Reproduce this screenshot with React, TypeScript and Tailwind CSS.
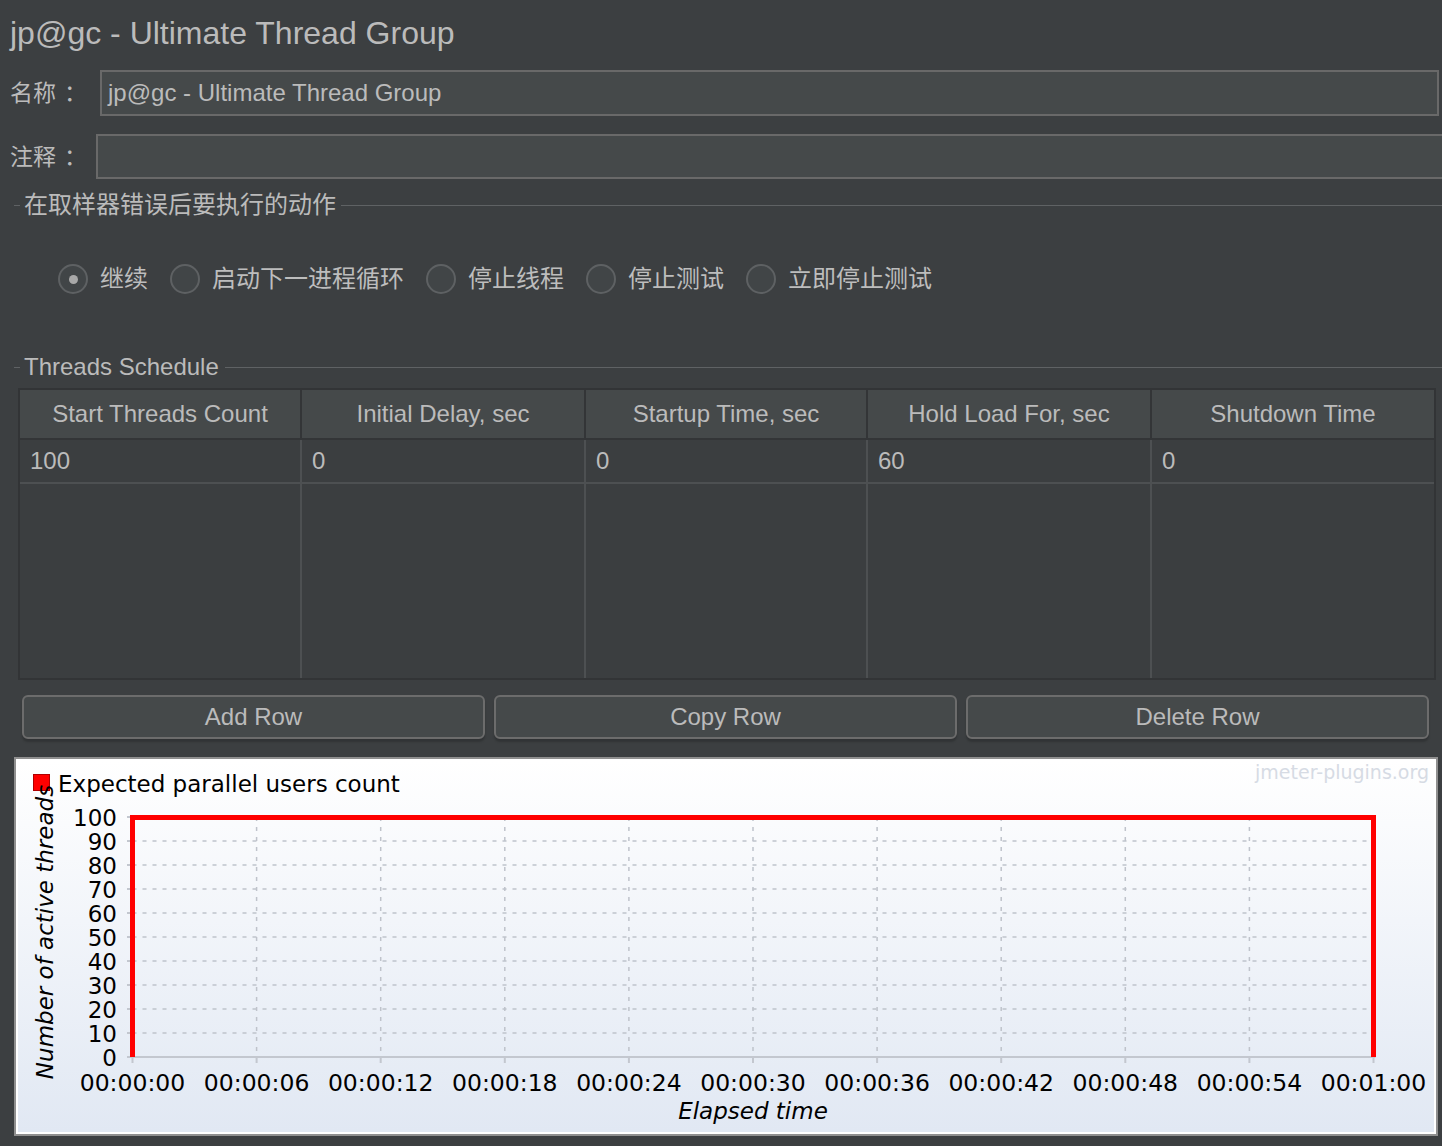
import React from "react";

const FONT = "font-['Liberation_Sans','Noto_Sans_CJK_SC',sans-serif]";

function TitledLine({ title, textGap }: { title: string; textGap: string }) {
  return (
    <div className="flex h-[24px] items-center">
      <div className="ml-[14px] h-px w-[6px] bg-[#5f6264]" />
      <span className={`ml-[4px] text-[24px] leading-[24px] text-[#bbbbbb] ${textGap}`}>{title}</span>
      <div className="h-px flex-1 bg-[#5f6264]" />
    </div>
  );
}

function Radio({ label, checked }: { label: string; checked?: boolean }) {
  return (
    <div className="flex items-center">
      <div className="flex h-[30px] w-[30px] items-center justify-center rounded-full border-2 border-[#5e6163] bg-[#414547]">
        {checked && <div className="h-[9px] w-[9px] rounded-full bg-[#a8a8a8]" />}
      </div>
      <span className="ml-[12px] text-[24px] leading-[30px] text-[#bdbdbd]">{label}</span>
    </div>
  );
}

const headers = [
  "Start Threads Count",
  "Initial Delay, sec",
  "Startup Time, sec",
  "Hold Load For, sec",
  "Shutdown Time",
];
const values = ["100", "0", "0", "60", "0"];
const colWidths = ["w-[282px]", "w-[284px]", "w-[282px]", "w-[284px]", "flex-1"];

function Chart() {
  const x0 = 132.5;
  const x1 = 1373.5;
  const yBase = 1057;
  const step = 24;
  const xs = Array.from({ length: 11 }, (_, i) => x0 + (i * (x1 - x0)) / 10);
  const ys = Array.from({ length: 11 }, (_, i) => yBase - i * step);
  const xl = [
    "00:00:00",
    "00:00:06",
    "00:00:12",
    "00:00:18",
    "00:00:24",
    "00:00:30",
    "00:00:36",
    "00:00:42",
    "00:00:48",
    "00:00:54",
    "00:01:00",
  ];
  const grid = "#bfc3cb";
  return (
    <svg width="1416" height="371" className="block">
      <g transform="translate(-18 -761)" fontFamily="'DejaVu Sans', sans-serif">
        <text x="1429" y="779" textAnchor="end" fontSize="19" fill="#d6dbe4">
          jmeter-plugins.org
        </text>
        <rect x="33.5" y="774.5" width="16" height="16" fill="#ff0000" stroke="#b00000" />
        <text x="58" y="792" fontSize="23" fill="#000">
          Expected parallel users count
        </text>
        {xs.slice(1, 10).map((x, i) => (
          <line key={"v" + i} x1={x} x2={x} y1={817} y2={yBase} stroke={grid} strokeWidth="1.5" strokeDasharray="4 6" />
        ))}
        {ys.slice(1, 10).map((y, i) => (
          <line key={"h" + i} x1={x0} x2={x1} y1={y} y2={y} stroke={grid} strokeWidth="1.5" strokeDasharray="4 6" />
        ))}
        <line x1={127} x2={x1 + 2} y1={yBase} y2={yBase} stroke="#c3c7cf" strokeWidth="2" />
        {xs.map((x, i) => (
          <line key={"t" + i} x1={x} x2={x} y1={yBase} y2={yBase + 6} stroke="#c3c7cf" strokeWidth="2" />
        ))}
        {ys.map((y, i) => (
          <line key={"l" + i} x1={127} x2={132} y1={y} y2={y} stroke="#c3c7cf" strokeWidth="2" />
        ))}
        {ys.map((y, i) => (
          <text key={"yl" + i} x="117" y={y + 9} textAnchor="end" fontSize="23" fill="#000">
            {String(i * 10)}
          </text>
        ))}
        {xs.map((x, i) => (
          <text key={"xl" + i} x={x} y="1091" textAnchor="middle" fontSize="23.5" fill="#000">
            {xl[i]}
          </text>
        ))}
        <text x="753" y="1119" textAnchor="middle" fontSize="23" fontStyle="italic" fill="#000">
          Elapsed time
        </text>
        <text
          transform="translate(53 932) rotate(-90)"
          textAnchor="middle"
          fontSize="23"
          fontStyle="italic"
          fill="#000"
        >
          Number of active threads
        </text>
        <path
          d={`M${x0} ${yBase} V817.5 H${x1} V${yBase}`}
          fill="none"
          stroke="#ff0000"
          strokeWidth="5"
          strokeLinejoin="miter"
        />
      </g>
    </svg>
  );
}

export default function App() {
  return (
    <div className={`h-[1146px] w-[1442px] overflow-hidden bg-[#3c3f41] text-[#bbbbbb] ${FONT}`}>
      {/* Title */}
      <div className="flex h-[66px] items-center pl-[10px] text-[32px] leading-[38px] text-[#bbbbbb]">
        jp@gc - Ultimate Thread Group
      </div>

      {/* Name */}
      <div className="mt-[4px] flex h-[46px] items-center">
        <div className="flex w-[100px] pl-[10px] text-[23px] leading-[24px]">
          <span>名称</span>
          <span className="ml-[8px]">：</span>
        </div>
        <div className="mr-[3px] flex h-full flex-1 items-center border-2 border-[#696969] bg-[#45494a] pl-[6px] text-[24px]">
          jp@gc - Ultimate Thread Group
        </div>
      </div>

      {/* Comment */}
      <div className="mt-[18px] flex h-[45px] items-center">
        <div className="flex w-[96px] pl-[10px] text-[23px] leading-[24px]">
          <span>注释</span>
          <span className="ml-[8px]">：</span>
        </div>
        <div className="h-full flex-1 border-2 border-r-0 border-[#696969] bg-[#45494a]" />
      </div>

      {/* On error group */}
      <div className="mt-[14px]">
        <TitledLine title="在取样器错误后要执行的动作" textGap="mr-[5px]" />
      </div>

      <div className="mt-[47px] flex h-[30px] items-center gap-[22px] pl-[58px]">
        <Radio label="继续" checked />
        <Radio label="启动下一进程循环" />
        <Radio label="停止线程" />
        <Radio label="停止测试" />
        <Radio label="立即停止测试" />
      </div>

      {/* Threads schedule */}
      <div className="mt-[61px]">
        <TitledLine title="Threads Schedule" textGap="mr-[6px]" />
      </div>

      <div className="ml-[18px] mt-[9px] flex h-[292px] w-[1418px] flex-col border-2 border-[#323436] bg-[#3b3e40]">
        <div className="flex h-[50px] border-b-2 border-[#333537] bg-[#45494a]">
          {headers.map((h, i) => (
            <div
              key={h}
              className={`flex items-center justify-center text-[24px] text-[#bbbbbb] ${colWidths[i]} ${i < 4 ? "border-r-2 border-[#333537]" : ""}`}
            >
              {h}
            </div>
          ))}
        </div>
        <div className="flex h-[44px] border-b-2 border-[#4d5052]">
          {values.map((v, i) => (
            <div
              key={i}
              className={`flex items-center pl-[10px] text-[24px] text-[#bbbbbb] ${colWidths[i]} ${i < 4 ? "border-r-2 border-[#4d5052]" : ""}`}
            >
              {v}
            </div>
          ))}
        </div>
        <div className="flex flex-1">
          {values.map((_, i) => (
            <div key={i} className={`${colWidths[i]} ${i < 4 ? "border-r-2 border-[#4d5052]" : ""}`} />
          ))}
        </div>
      </div>

      {/* Buttons */}
      <div className="ml-[22px] mr-[13px] mt-[15px] grid h-[44px] grid-cols-3 gap-[9px]">
        {["Add Row", "Copy Row", "Delete Row"].map((b) => (
          <div
            key={b}
            className="flex items-center justify-center rounded-[6px] border-2 border-[#6c6c6c] bg-[#45494a] text-[24px] text-[#bbbbbb] shadow-[0_3px_2px_rgba(0,0,0,0.18)]"
          >
            {b}
          </div>
        ))}
      </div>

      {/* Chart */}
      <div className="ml-[14px] mt-[18px] h-[379px] w-[1424px] border-2 border-[#8f8f8f] bg-white p-[2px]">
        <div className="h-full w-full bg-linear-to-b from-white to-[#e1e8f3]">
          <Chart />
        </div>
      </div>
    </div>
  );
}
